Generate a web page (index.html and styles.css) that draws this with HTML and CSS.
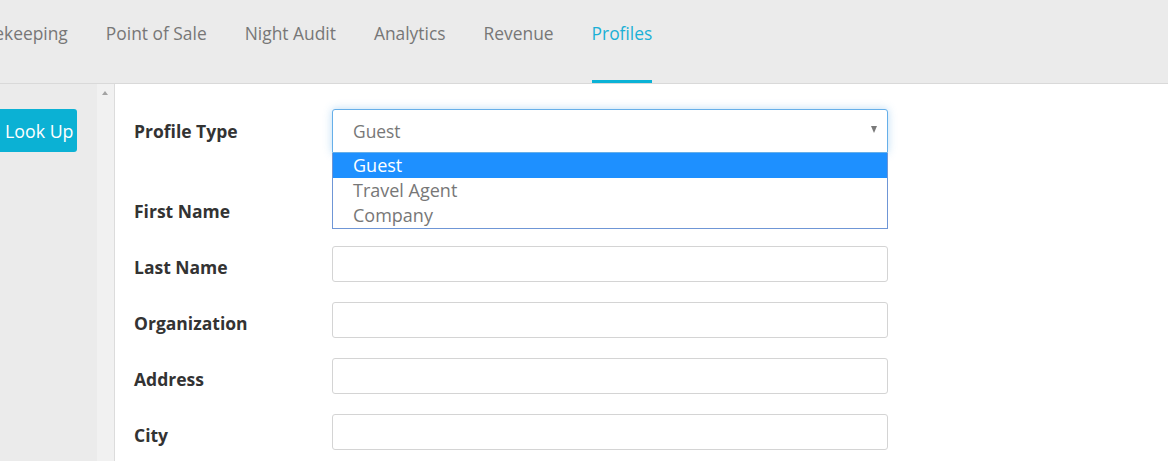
FILE: index.html
```html
<!DOCTYPE html>
<html>
<head>
<meta charset="utf-8">
<link rel="stylesheet" href="styles.css">
</head>
<body>
<header class="topnav">
  <nav class="tabs">
    <a class="tab">Housekeeping</a>
    <a class="tab">Point of Sale</a>
    <a class="tab">Night Audit</a>
    <a class="tab">Analytics</a>
    <a class="tab">Revenue</a>
    <a class="tab active">Profiles</a>
  </nav>
</header>
<div class="body">
  <aside class="sidebar">
    <button class="lookup">Look Up</button>
  </aside>
  <div class="scrollcol"><span class="uparrow"></span></div>
  <main class="main">
    <form class="form">
      <div class="row row-select">
        <label class="label">Profile Type</label>
        <div class="selectwrap">
          <div class="select"><span>Guest</span><span class="caret"></span></div>
          <ul class="dropdown">
            <li class="opt selected">Guest</li>
            <li class="opt">Travel Agent</li>
            <li class="opt">Company</li>
          </ul>
        </div>
      </div>
      <div class="row"><label class="label">First Name</label><div class="input"></div></div>
      <div class="row"><label class="label">Last Name</label><div class="input"></div></div>
      <div class="row"><label class="label">Organization</label><div class="input"></div></div>
      <div class="row"><label class="label">Address</label><div class="input"></div></div>
      <div class="row"><label class="label">City</label><div class="input"></div></div>
    </form>
  </main>
</div>
</body>
</html>
```
FILE: styles.css
```css
* { box-sizing: border-box; }
html, body { margin: 0; padding: 0; }
body {
  font-family: "Open Sans", "Liberation Sans", sans-serif;
  background: #ffffff;
  width: 1168px;
  height: 461px;
  overflow: hidden;
}
.topnav {
  height: 84px;
  background: #ebebeb;
  border-bottom: 1px solid #d9d9d9;
  overflow: hidden;
}
.tabs {
  display: flex;
  gap: 38px;
  margin-left: -48px;
  height: 83px;
}
.tab {
  font-size: 17.4px;
  color: #777777;
  line-height: 24px;
  padding-top: 21px;
  height: 83px;
  border-bottom: 3px solid transparent;
  white-space: nowrap;
}
.tab.active {
  color: #1ab0d6;
  border-bottom-color: #0bb2d6;
}
.body {
  display: flex;
  height: 377px;
}
.sidebar {
  width: 97px;
  background: #ebebeb;
  padding-top: 25px;
}
.lookup {
  margin-left: -7px;
  height: 43px;
  width: 84px;
  border: 0;
  border-radius: 3px;
  background: #0bb1d4;
  color: #ffffff;
  font-family: "Open Sans", "Liberation Sans", sans-serif;
  font-size: 17.8px;
  text-align: left;
  padding: 0 0 0 12px;
}
.scrollcol {
  width: 18px;
  background: #f1f1f1;
  border-right: 1px solid #dcdcdc;
  padding-top: 7px;
  display: flex;
  justify-content: center;
}
.uparrow {
  display: block;
  width: 0;
  height: 0;
  margin-left: -2px;
  border-left: 3.5px solid transparent;
  border-right: 3.5px solid transparent;
  border-bottom: 4px solid #a3a3a3;
}
.main {
  flex: 1;
  padding: 25px 0 0 19px;
}
.form {
  display: flex;
  flex-direction: column;
  gap: 20px;
}
.row {
  display: flex;
  align-items: center;
}
.row-select { margin-bottom: 17px; }
.label {
  width: 198px;
  font-weight: 700;
  font-size: 17.5px;
  color: #333333;
  padding-top: 6px;
}
.row-select .label { padding-top: 0; }
.selectwrap {
  position: relative;
  width: 556px;
}
.select {
  height: 44px;
  border: 1px solid #66afe9;
  border-radius: 3px 3px 0 0;
  box-shadow: 0 0 8px rgba(102, 175, 233, 0.45);
  display: flex;
  align-items: center;
  justify-content: space-between;
  padding: 0 10px 0 20px;
  font-size: 17.4px;
  color: #777777;
  background: #ffffff;
}
.caret {
  width: 0;
  height: 0;
  border-left: 3.5px solid transparent;
  border-right: 3.5px solid transparent;
  border-top: 7px solid #7a7a7a;
  margin-top: -3px;
}
.dropdown {
  position: absolute;
  left: 0;
  top: 44px;
  width: 556px;
  margin: 0;
  padding: 0;
  list-style: none;
  background: #ffffff;
  border: 1px solid #6f96d6;
  border-top: 0;
  z-index: 5;
}
.opt {
  height: 25px;
  line-height: 25px;
  padding-left: 20px;
  font-size: 18px;
  color: #777777;
}
.opt.selected {
  background: #1e90ff;
  color: #ffffff;
}
.input {
  width: 556px;
  height: 36px;
  border: 1px solid #d4d4d4;
  border-radius: 3px;
  background: #ffffff;
}
```
